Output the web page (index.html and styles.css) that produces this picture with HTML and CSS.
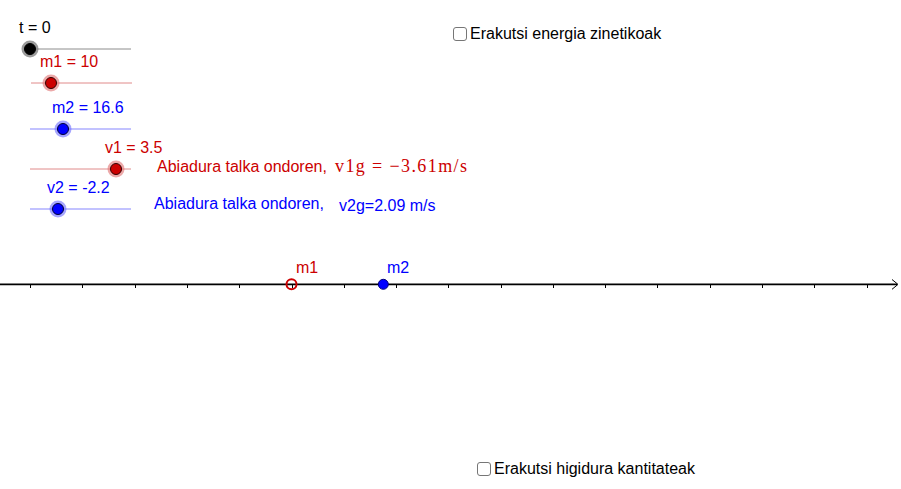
FILE: index.html
```html
<!DOCTYPE html>
<html>
<head>
<meta charset="utf-8">
<link rel="stylesheet" href="styles.css">
</head>
<body>
<div class="applet">
  <svg class="graphics" width="901" height="489" viewBox="0 0 901 489" xmlns="http://www.w3.org/2000/svg">
    <!-- sliders -->
    <g class="slider">
      <line x1="30" y1="49" x2="131" y2="49" stroke="#8c8c8c" stroke-width="1"/>
      <circle cx="30" cy="49" r="8.5" fill="#7a7a7a" fill-opacity="0.75"/>
      <circle cx="30" cy="49" r="5.5" fill="#000" stroke="#000" stroke-width="1"/>
      <text x="19" y="33" class="lbl black">t = 0</text>
    </g>
    <g class="slider">
      <line x1="31" y1="83" x2="132" y2="83" stroke="#e08a8a" stroke-width="1"/>
      <circle cx="51" cy="83" r="8.5" fill="#e07070" fill-opacity="0.6"/>
      <circle cx="51" cy="83" r="5.5" fill="#cc0000" stroke="#330000" stroke-width="1"/>
      <text x="40" y="67" class="lbl red">m1 = 10</text>
    </g>
    <g class="slider">
      <line x1="30" y1="129" x2="131" y2="129" stroke="#8585ff" stroke-width="1"/>
      <circle cx="63" cy="129" r="8.5" fill="#6b6bff" fill-opacity="0.6"/>
      <circle cx="63" cy="129" r="5.5" fill="#0000ff" stroke="#000033" stroke-width="1"/>
      <text x="52" y="113" class="lbl blue">m2 = 16.6</text>
    </g>
    <g class="slider">
      <line x1="30" y1="169" x2="131" y2="169" stroke="#e08a8a" stroke-width="1"/>
      <circle cx="116" cy="169" r="8.5" fill="#e07070" fill-opacity="0.6"/>
      <circle cx="116" cy="169" r="5.5" fill="#cc0000" stroke="#330000" stroke-width="1"/>
      <text x="105" y="153" class="lbl red">v1 = 3.5</text>
    </g>
    <g class="slider">
      <line x1="30" y1="209" x2="131" y2="209" stroke="#8585ff" stroke-width="1"/>
      <circle cx="58" cy="209" r="8.5" fill="#6b6bff" fill-opacity="0.6"/>
      <circle cx="58" cy="209" r="5.5" fill="#0000ff" stroke="#000033" stroke-width="1"/>
      <text x="47" y="193" class="lbl blue">v2 = -2.2</text>
    </g>

    <!-- result texts -->
    <text x="157" y="172" class="lbl red">Abiadura talka ondoren,</text>
    <text x="335" y="172" class="math red" textLength="132" lengthAdjust="spacing">v1g = −3.61m/s</text>
    <text x="154" y="209" class="lbl blue">Abiadura talka ondoren,</text>
    <text x="339" y="211" class="lbl blue">v2g=2.09 m/s</text>

    <!-- axis -->
    <line x1="0" y1="284.4" x2="897" y2="284.4" stroke="#000" stroke-width="1.6"/>
    <g stroke="#000" stroke-width="1">
      <line x1="30.5" y1="284" x2="30.5" y2="288"/>
      <line x1="82.5" y1="284" x2="82.5" y2="288"/>
      <line x1="135.5" y1="284" x2="135.5" y2="288"/>
      <line x1="187.5" y1="284" x2="187.5" y2="288"/>
      <line x1="239.5" y1="284" x2="239.5" y2="288"/>
      <line x1="292.5" y1="284" x2="292.5" y2="288"/>
      <line x1="344.5" y1="284" x2="344.5" y2="288"/>
      <line x1="396.5" y1="284" x2="396.5" y2="288"/>
      <line x1="448.5" y1="284" x2="448.5" y2="288"/>
      <line x1="501.5" y1="284" x2="501.5" y2="288"/>
      <line x1="553.5" y1="284" x2="553.5" y2="288"/>
      <line x1="605.5" y1="284" x2="605.5" y2="288"/>
      <line x1="657.5" y1="284" x2="657.5" y2="288"/>
      <line x1="710.5" y1="284" x2="710.5" y2="288"/>
      <line x1="762.5" y1="284" x2="762.5" y2="288"/>
      <line x1="814.5" y1="284" x2="814.5" y2="288"/>
      <line x1="867.5" y1="284" x2="867.5" y2="288"/>
    </g>
    <polyline points="892,279.5 898,284.4 892,289.3" fill="none" stroke="#000" stroke-width="1"/>

    <!-- points -->
    <circle cx="291.5" cy="284.3" r="5" fill="none" stroke="#cc0000" stroke-width="2"/>
    <text x="296" y="273" class="lbl red">m1</text>
    <circle cx="383.3" cy="284.3" r="5" fill="#0000ff" stroke="#00007a" stroke-width="1"/>
    <text x="387" y="273" class="lbl blue">m2</text>
  </svg>

  <label class="check check-energy"><span class="box"></span>Erakutsi energia zinetikoak</label>
  <label class="check check-momentum"><span class="box"></span>Erakutsi higidura kantitateak</label>
</div>
</body>
</html>
```
FILE: styles.css
```css
html, body {
  margin: 0;
  padding: 0;
  background: #ffffff;
}

.applet {
  position: relative;
  width: 901px;
  height: 489px;
  overflow: hidden;
  background: #ffffff;
  font-family: "Liberation Sans", Arial, sans-serif;
}

.graphics {
  display: block;
}

.lbl {
  font-family: "Liberation Sans", Arial, sans-serif;
  font-size: 16px;
}

.math {
  font-family: "Liberation Serif", "Times New Roman", serif;
  font-size: 18px;
}

.black { fill: #000000; }
.red { fill: #cc0000; }
.blue { fill: #0000ff; }

.check {
  position: absolute;
  display: flex;
  align-items: center;
  gap: 3px;
  font-size: 16px;
  line-height: 18px;
  color: #000000;
}

.box {
  display: block;
  width: 12px;
  height: 12px;
  border: 1px solid #767676;
  border-radius: 3px;
  background: #ffffff;
}

.check-energy {
  left: 453px;
  top: 25px;
}

.check-momentum {
  left: 477px;
  top: 460px;
}
```
